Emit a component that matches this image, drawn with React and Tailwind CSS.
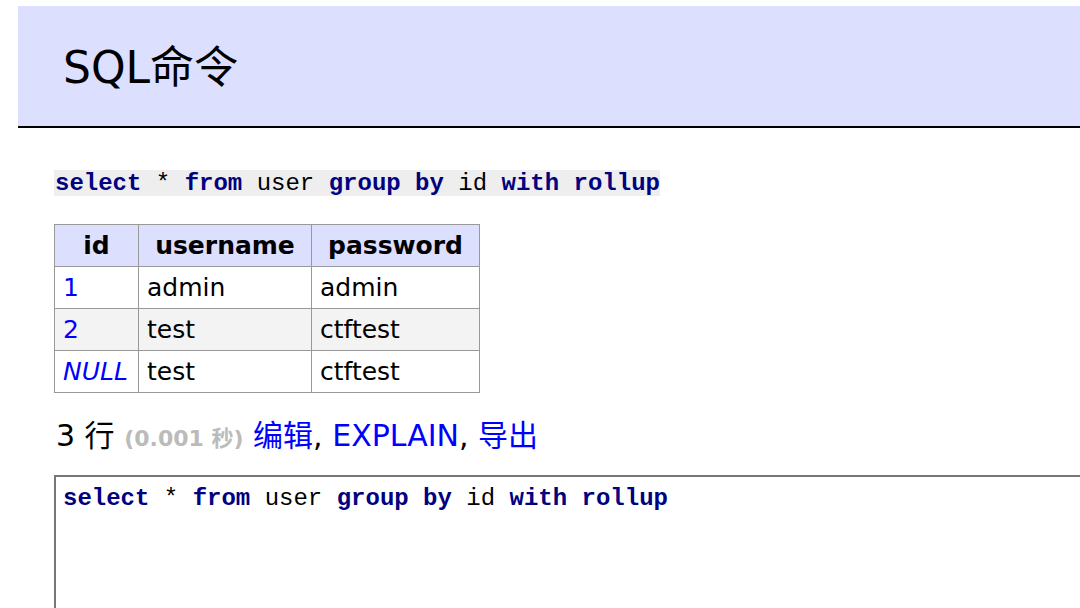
const sans = { fontFamily: '"DejaVu Sans", "Noto Sans CJK SC", sans-serif' };

function Sql() {
    return (
        <>
            <b className="text-[#000080]">select</b> *{" "}
            <b className="text-[#000080]">from</b> user{" "}
            <b className="text-[#000080]">group</b>{" "}
            <b className="text-[#000080]">by</b> id{" "}
            <b className="text-[#000080]">with</b>{" "}
            <b className="text-[#000080]">rollup</b>
        </>
    );
}

const rows = [
    { id: "1", user: "admin", pass: "admin" },
    { id: "2", user: "test", pass: "ctftest" },
    { id: "NULL", user: "test", pass: "ctftest" },
];

export default function App() {
    return (
        <div className="w-[1080px] h-[608px] overflow-hidden bg-white pl-[18px] pt-[6px] text-black" style={sans}>
            {/* HEADER */}
            <div className="h-[122px] w-[1100px] bg-[#dddfff] border-b-2 border-black flex items-center pl-[45px] pt-[3px]">
                <h1 className="text-[44px] font-normal leading-none">SQL命令</h1>
            </div>

            <div className="pl-[36px]">
                {/* QUERY */}
                <div className="mt-[42px] inline-block bg-[#eeeeee] h-[26px] leading-[28px] text-[24px] font-['Liberation_Mono',monospace] whitespace-pre pl-px">
                    <Sql />
                </div>

                {/* RESULT TABLE */}
                <table className="mt-[27px] border-collapse text-[25px] leading-[30px]">
                    <thead>
                        <tr className="bg-[#dddfff] h-[42px]">
                            <th className="border border-[#999] w-[84px] px-2 font-bold">id</th>
                            <th className="border border-[#999] w-[173px] px-2 font-bold">username</th>
                            <th className="border border-[#999] w-[168px] px-2 font-bold">password</th>
                        </tr>
                    </thead>
                    <tbody>
                        {rows.map((r, i) => (
                            <tr key={i} className={`h-[42px] ${i === 1 ? "bg-[#f3f3f3]" : "bg-white"}`}>
                                <td className={`border border-[#999] px-2 text-[#0000ff] ${r.id === "NULL" ? "italic" : ""}`}>
                                    {r.id}
                                </td>
                                <td className="border border-[#999] px-2">{r.user}</td>
                                <td className="border border-[#999] px-2">{r.pass}</td>
                            </tr>
                        ))}
                    </tbody>
                </table>

                {/* STATUS */}
                <div className="mt-[25px] text-[30px] leading-[36px] pl-[2px]">
                    3 行 <span className="text-[#bbbbbb] text-[22px] font-bold">(0.001 秒)</span>{" "}
                    <a className="text-[#0000ff]">编辑</a>,{" "}
                    <a className="text-[#0000ff]">EXPLAIN</a>,{" "}
                    <a className="text-[#0000ff]">导出</a>
                </div>

                {/* EDITOR */}
                <div className="mt-[18px] w-[1100px] h-[200px] border-2 border-[#777] px-[7px] pt-[8px] text-[24px] leading-[27px] font-['Liberation_Mono',monospace] whitespace-pre">
                    <Sql />
                </div>
            </div>
        </div>
    );
}
